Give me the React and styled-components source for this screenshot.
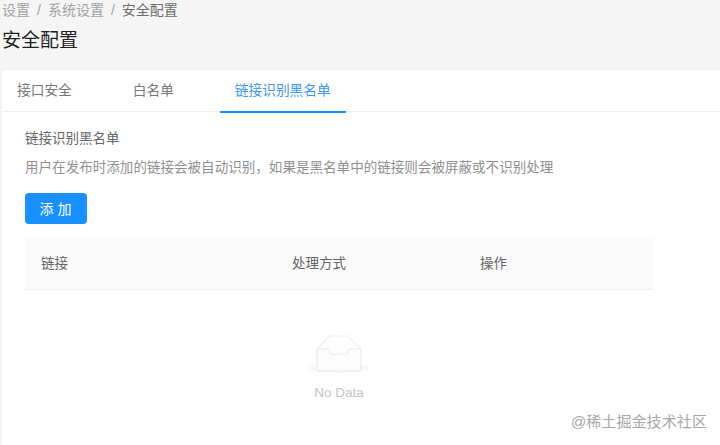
import React from "react";
import styled, { createGlobalStyle } from "styled-components";

const Global = createGlobalStyle`
  html, body { margin: 0; padding: 0; background: #f5f5f5; }
  body { font-family: "Liberation Sans", "Noto Sans CJK SC", sans-serif; overflow: hidden; }
`;
const Page = styled.div`
  position: relative;
  width: 720px;
  height: 445px;
  overflow: hidden;
  padding-left: 2px;
  box-sizing: border-box;
`;
const Crumbs = styled.nav`
  display: flex;
  gap: 7px;
  height: 18px;
  padding-top: 1px;
  font-size: 14px;
  line-height: 18px;
  color: #a3a3a3;
`;
const Current = styled.span`
  color: #6e6e6e;
`;
const Title = styled.h1`
  margin: 8px 0 0;
  height: 43px;
  font-size: 19px;
  line-height: 27px;
  font-weight: 400;
  color: #222;
`;
const Card = styled.main`
  background: #fff;
  border-radius: 4px 0 0 0;
  height: 375px;
`;
const Tabs = styled.div`
  display: flex;
  gap: 31px;
  height: 41px;
  border-bottom: 1px solid #f0f0f0;
`;
const Tab = styled.div`
  padding: 0 15px;
  font-size: 13.7px;
  line-height: 41px;
  height: 41px;
  white-space: nowrap;
  color: ${(p) => (p.$active ? "#4096ee" : "#777")};
  border-bottom: 2px solid ${(p) => (p.$active ? "#1890ff" : "transparent")};
`;
const Body = styled.section`
  padding: 17px 0 0 23px;
  width: 628px;
`;
const Heading = styled.h2`
  margin: 0;
  font-size: 13.5px;
  line-height: 20px;
  font-weight: 400;
  color: #666;
`;
const Hint = styled.p`
  margin: 9px 0 0;
  font-size: 13.55px;
  line-height: 20px;
  color: #909090;
  white-space: nowrap;
`;
const AddButton = styled.button`
  display: block;
  margin-top: 15px;
  width: 62px;
  height: 31px;
  padding: 0 0 2px;
  border: 0;
  border-radius: 4px;
  background: #1890ff;
  color: #fff;
  font-family: inherit;
  font-size: 14px;
  letter-spacing: 4px;
  text-indent: 3px;
`;
const Table = styled.div`
  margin-top: 14px;
`;
const HeadRow = styled.div`
  display: grid;
  grid-template-columns: 251px 188px 1fr;
  height: 47px;
  padding: 0 0 4px 16px;
  align-items: center;
  background: #fafafa;
  border-bottom: 1px solid #eee;
  font-size: 13.5px;
  color: #666;
`;
const Empty = styled.div`
  display: flex;
  flex-direction: column;
  align-items: center;
  margin-top: 44px;
`;
const EmptyText = styled.div`
  margin-top: 8px;
  font-size: 13.5px;
  line-height: 18px;
  color: #c4c4c4;
`;
const Watermark = styled.div`
  position: absolute;
  right: 13px;
  top: 413px;
  font-size: 15.1px;
  line-height: 18px;
  color: #a8a8a8;
  white-space: nowrap;
`;

const InboxIcon = () => (
  <svg width="64" height="42" viewBox="0 0 64 42" fill="none">
    <ellipse cx="32" cy="34" rx="31" ry="5" fill="#f8f8f8" />
    <path d="M10 15 L23 2 H41 L54 15" fill="#fefefe" stroke="#efefef" strokeWidth="1.2" />
    <path
      d="M10 15 H21 Q23 15 23 17.5 Q23 20 26 20 H38 Q41 20 41 17.5 Q41 15 43 15 H54 V34 Q54 37 51 37 H13 Q10 37 10 34 Z"
      fill="#fcfcfc"
      stroke="#ebebeb"
      strokeWidth="1.2"
    />
  </svg>
);

export default function App() {
  return (
    <Page>
      <Global />
      <Crumbs>
        <span>设置</span>
        <span>/</span>
        <span>系统设置</span>
        <span>/</span>
        <Current>安全配置</Current>
      </Crumbs>
      <Title>安全配置</Title>
      <Card>
        <Tabs>
          <Tab>接口安全</Tab>
          <Tab>白名单</Tab>
          <Tab $active>链接识别黑名单</Tab>
        </Tabs>
        <Body>
          <Heading>链接识别黑名单</Heading>
          <Hint>用户在发布时添加的链接会被自动识别，如果是黑名单中的链接则会被屏蔽或不识别处理</Hint>
          <AddButton>添加</AddButton>
          <Table>
            <HeadRow>
              <span>链接</span>
              <span>处理方式</span>
              <span>操作</span>
            </HeadRow>
            <Empty>
              <InboxIcon />
              <EmptyText>No Data</EmptyText>
            </Empty>
          </Table>
        </Body>
      </Card>
      <Watermark>@稀土掘金技术社区</Watermark>
    </Page>
  );
}
